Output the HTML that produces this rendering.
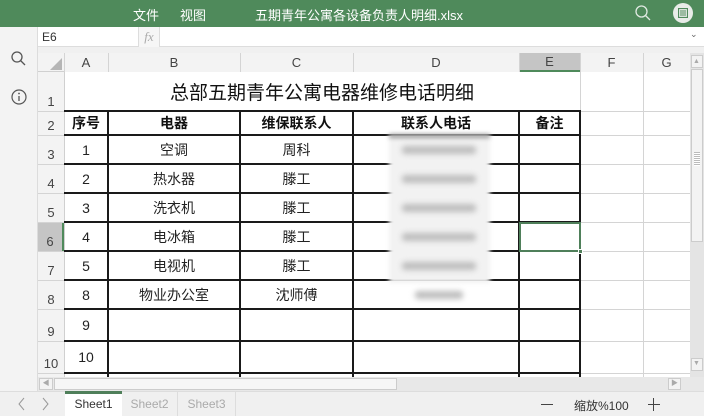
<!DOCTYPE html>
<html><head><meta charset="utf-8">
<style>
*{margin:0;padding:0;box-sizing:border-box}
body{width:704px;height:416px;overflow:hidden;background:#fff;font-family:"Liberation Sans","Noto Sans CJK SC",sans-serif;position:relative}
.a{position:absolute}
.top{left:0;top:0;width:704px;height:27px;background:#4f8a5b;color:#fff;font-size:13px}
.side{left:0;top:27px;width:38px;height:364px;background:#f3f3f3;border-right:1px solid #dcdcdc}
.hl{position:absolute;height:1px;background:#d4d4d4}
.vl{position:absolute;width:1px;background:#d4d4d4}
.bh{position:absolute;height:2px;background:#1a1a1a}
.bv{position:absolute;width:2px;background:#1a1a1a}
.c{position:absolute;display:flex;align-items:center;justify-content:center;font-size:14px;color:#222}
.b{font-weight:bold;color:#111}
.rh{position:absolute;left:38px;width:26px;display:flex;align-items:flex-end;justify-content:center;font-size:13px;color:#444;padding-bottom:2px;background:#f3f3f3}
.ch{position:absolute;top:53px;height:19px;display:flex;align-items:center;justify-content:center;font-size:13px;color:#444;background:#f3f3f3}
.blur{position:absolute;background:#bdbdbd;filter:blur(3px);border-radius:3px}
</style></head><body>
<div class="a top">
 <span class="a" style="left:133px;top:5px">文件</span>
 <span class="a" style="left:180px;top:5px">视图</span>
 <span class="a" style="left:255px;top:5px">五期青年公寓各设备负责人明细.xlsx</span>
 <svg class="a" style="left:634px;top:4px" width="18" height="18" viewBox="0 0 18 18"><circle cx="7.5" cy="7.5" r="5.5" fill="none" stroke="#dfe9e1" stroke-width="1.3"/><line x1="11.5" y1="11.5" x2="16" y2="16" stroke="#dfe9e1" stroke-width="1.3"/></svg>
 <div class="a" style="left:673px;top:3px;width:20px;height:20px;border-radius:50%;background:#e8ece8"></div>
 <svg class="a" style="left:678px;top:8px" width="10" height="10" viewBox="0 0 10 10"><rect x="0.5" y="0.5" width="9" height="9" fill="none" stroke="#4f8a5b" stroke-width="1.2"/><line x1="2" y1="3" x2="8" y2="3" stroke="#4f8a5b"/><line x1="2" y1="5" x2="8" y2="5" stroke="#4f8a5b"/><line x1="2" y1="7" x2="8" y2="7" stroke="#4f8a5b"/></svg>
</div>
<div class="a side"></div>
<svg class="a" style="left:10px;top:50px" width="18" height="18" viewBox="0 0 18 18"><circle cx="7" cy="7" r="5" fill="none" stroke="#555" stroke-width="1.3"/><line x1="10.5" y1="10.5" x2="15" y2="15" stroke="#555" stroke-width="1.3"/></svg>
<svg class="a" style="left:10px;top:88px" width="18" height="18" viewBox="0 0 18 18"><circle cx="9" cy="9" r="7" fill="none" stroke="#555" stroke-width="1.2"/><line x1="9" y1="8" x2="9" y2="13" stroke="#555" stroke-width="1.3"/><circle cx="9" cy="5.5" r="0.9" fill="#555"/></svg>
<div class="a" style="left:38px;top:27px;width:666px;height:20px;background:#fff;border-bottom:1px solid #ddd"></div>
<div class="a" style="left:42px;top:30px;font-size:12px;color:#333">E6</div>
<div class="a" style="left:138px;top:27px;width:22px;height:20px;border-left:1px solid #ddd;border-right:1px solid #ddd;background:#f6f6f6;font-family:'Liberation Serif',serif;font-style:italic;color:#aaa;font-size:13px;text-align:center;line-height:20px">fx</div>
<div class="a" style="left:690px;top:29px;font-size:9px;color:#666">⌄</div>
<div class="a" style="left:38px;top:47px;width:666px;height:6px;background:#f0f0f0"></div>
<div class="a" style="left:38px;top:53px;width:652px;height:19px;background:#f3f3f3;border-bottom:1px solid #d0d0d0"></div>
<svg class="a" style="left:50px;top:58px" width="12" height="12"><polygon points="12,0 12,12 0,12" fill="#b5b5b5"/></svg>
<div class="ch" style="left:64px;width:44px">A</div>
<div class="ch" style="left:108px;width:132px">B</div>
<div class="ch" style="left:240px;width:113px">C</div>
<div class="ch" style="left:353px;width:166px">D</div>
<div class="ch" style="left:519px;width:61px;background:#c5c5c5;border-bottom:2px solid #4f8a5b;height:19px">E</div>
<div class="ch" style="left:580px;width:63px">F</div>
<div class="ch" style="left:643px;width:47px">G</div>
<div class="vl" style="left:64px;top:53px;height:19px"></div>
<div class="vl" style="left:108px;top:53px;height:19px"></div>
<div class="vl" style="left:240px;top:53px;height:19px"></div>
<div class="vl" style="left:353px;top:53px;height:19px"></div>
<div class="vl" style="left:519px;top:53px;height:19px"></div>
<div class="vl" style="left:580px;top:53px;height:19px"></div>
<div class="vl" style="left:643px;top:53px;height:19px"></div>
<div class="rh" style="top:72px;height:39px">1</div>
<div class="rh" style="top:111px;height:24px">2</div>
<div class="rh" style="top:135px;height:29px">3</div>
<div class="rh" style="top:164px;height:29px">4</div>
<div class="rh" style="top:193px;height:29px">5</div>
<div class="rh" style="top:222px;height:29px;background:#c5c5c5;border-right:2px solid #4f8a5b">6</div>
<div class="rh" style="top:251px;height:29px">7</div>
<div class="rh" style="top:280px;height:29px">8</div>
<div class="rh" style="top:309px;height:32px">9</div>
<div class="rh" style="top:341px;height:32px">10</div>
<div class="rh" style="top:373px;height:4px"></div>
<div class="vl" style="left:64px;top:72px;height:305px;background:#d0d0d0"></div>
<div class="hl" style="left:38px;top:111px;width:652px"></div>
<div class="hl" style="left:38px;top:135px;width:652px"></div>
<div class="hl" style="left:38px;top:164px;width:652px"></div>
<div class="hl" style="left:38px;top:193px;width:652px"></div>
<div class="hl" style="left:38px;top:222px;width:652px"></div>
<div class="hl" style="left:38px;top:251px;width:652px"></div>
<div class="hl" style="left:38px;top:280px;width:652px"></div>
<div class="hl" style="left:38px;top:309px;width:652px"></div>
<div class="hl" style="left:38px;top:341px;width:652px"></div>
<div class="hl" style="left:38px;top:373px;width:652px"></div>
<div class="vl" style="left:643px;top:72px;height:305px"></div>
<div class="vl" style="left:580px;top:72px;height:39px"></div>
<div class="bh" style="left:64px;top:110px;width:517px"></div>
<div class="bh" style="left:64px;top:134px;width:517px"></div>
<div class="bh" style="left:64px;top:163px;width:517px"></div>
<div class="bh" style="left:64px;top:192px;width:517px"></div>
<div class="bh" style="left:64px;top:221px;width:517px"></div>
<div class="bh" style="left:64px;top:250px;width:517px"></div>
<div class="bh" style="left:64px;top:279px;width:517px"></div>
<div class="bh" style="left:64px;top:308px;width:517px"></div>
<div class="bh" style="left:64px;top:340px;width:517px"></div>
<div class="bh" style="left:64px;top:372px;width:517px"></div>
<div class="bv" style="left:107px;top:110px;height:267px"></div>
<div class="bv" style="left:239px;top:110px;height:267px"></div>
<div class="bv" style="left:352px;top:110px;height:267px"></div>
<div class="bv" style="left:518px;top:110px;height:267px"></div>
<div class="bv" style="left:579px;top:110px;height:267px"></div>
<div class="c" style="left:64px;top:72px;width:516px;height:39px;font-size:19px;color:#111">总部五期青年公寓电器维修电话明细</div>
<div class="c b" style="left:64px;top:111px;width:44px;height:24px">序号</div>
<div class="c b" style="left:108px;top:111px;width:132px;height:24px">电器</div>
<div class="c b" style="left:240px;top:111px;width:113px;height:24px">维保联系人</div>
<div class="c b" style="left:353px;top:111px;width:166px;height:24px">联系人电话</div>
<div class="c b" style="left:519px;top:111px;width:61px;height:24px">备注</div>
<div class="c" style="left:64px;top:135px;width:44px;height:29px">1</div>
<div class="c" style="left:108px;top:135px;width:132px;height:29px">空调</div>
<div class="c" style="left:240px;top:135px;width:113px;height:29px">周科</div>
<div class="c" style="left:64px;top:164px;width:44px;height:29px">2</div>
<div class="c" style="left:108px;top:164px;width:132px;height:29px">热水器</div>
<div class="c" style="left:240px;top:164px;width:113px;height:29px">滕工</div>
<div class="c" style="left:64px;top:193px;width:44px;height:29px">3</div>
<div class="c" style="left:108px;top:193px;width:132px;height:29px">洗衣机</div>
<div class="c" style="left:240px;top:193px;width:113px;height:29px">滕工</div>
<div class="c" style="left:64px;top:222px;width:44px;height:29px">4</div>
<div class="c" style="left:108px;top:222px;width:132px;height:29px">电冰箱</div>
<div class="c" style="left:240px;top:222px;width:113px;height:29px">滕工</div>
<div class="c" style="left:64px;top:251px;width:44px;height:29px">5</div>
<div class="c" style="left:108px;top:251px;width:132px;height:29px">电视机</div>
<div class="c" style="left:240px;top:251px;width:113px;height:29px">滕工</div>
<div class="c" style="left:64px;top:280px;width:44px;height:29px">8</div>
<div class="c" style="left:108px;top:280px;width:132px;height:29px">物业办公室</div>
<div class="c" style="left:240px;top:280px;width:113px;height:29px">沈师傅</div>
<div class="c" style="left:64px;top:309px;width:44px;height:32px">9</div>
<div class="c" style="left:64px;top:341px;width:44px;height:32px">10</div>
<div class="a" style="left:389px;top:135px;width:101px;height:148px;background:#f2f2f2;filter:blur(2px)"></div>
<div class="a" style="left:389px;top:134px;width:101px;height:4px;background:#999;filter:blur(2px)"></div>
<div class="blur" style="left:402px;top:146px;width:74px;height:8px"></div>
<div class="blur" style="left:402px;top:175px;width:74px;height:8px"></div>
<div class="blur" style="left:402px;top:204px;width:74px;height:8px"></div>
<div class="blur" style="left:402px;top:233px;width:74px;height:8px"></div>
<div class="blur" style="left:402px;top:262px;width:74px;height:8px"></div>
<div class="blur" style="left:415px;top:291px;width:48px;height:8px"></div>
<div class="a" style="left:519px;top:222px;width:62px;height:30px;border:2px solid #4f7f5a"></div>
<div class="a" style="left:578px;top:249px;width:5px;height:5px;background:#4f7f5a;border:1px solid #fff"></div>
<div class="a" style="left:690px;top:53px;width:14px;height:324px;background:#e4e4e4"></div>
<div class="a" style="left:691px;top:55px;width:12px;height:13px;background:#f3f3f3;border:1px solid #ccc"></div>
<div class="a" style="left:693px;top:58px;font-size:7px;color:#aaa">▲</div>
<div class="a" style="left:691px;top:69px;width:12px;height:173px;background:#f3f3f3;border:1px solid #ccc"></div>
<div class="a" style="left:694px;top:152px;width:6px;height:14px;border-top:1px solid #bbb;background:repeating-linear-gradient(#fff 0 1px,#bbb 1px 2px)"></div>
<div class="a" style="left:691px;top:358px;width:12px;height:13px;background:#f3f3f3;border:1px solid #ccc"></div>
<div class="a" style="left:693px;top:360px;font-size:7px;color:#aaa">▼</div>
<div class="a" style="left:38px;top:377px;width:666px;height:14px;background:#e8e8e8"></div>
<div class="a" style="left:39px;top:378px;width:14px;height:12px;background:#f3f3f3;border:1px solid #ccc;font-size:7px;color:#aaa;text-align:center;line-height:10px">◀</div>
<div class="a" style="left:54px;top:378px;width:343px;height:12px;background:#f6f6f6;border:1px solid #ccc"></div>
<div class="a" style="left:668px;top:378px;width:13px;height:12px;background:#f3f3f3;border:1px solid #ccc;font-size:7px;color:#aaa;text-align:center;line-height:10px">▶</div>
<div class="a" style="left:0;top:391px;width:704px;height:25px;background:#f0f0f0;border-top:1px solid #ddd"></div>
<svg class="a" style="left:16px;top:396px" width="40" height="16" viewBox="0 0 40 16"><polyline points="8,2 3,8 8,14" fill="none" stroke="#999" stroke-width="1"/><polyline points="27,2 32,8 27,14" fill="none" stroke="#999" stroke-width="1"/></svg>
<div class="a" style="left:65px;top:391px;width:57px;height:25px;background:#fff;border-top:3px solid #4f7f5a;font-size:12px;color:#333;text-align:center;line-height:21px">Sheet1</div>
<div class="a" style="left:122px;top:392px;width:56px;height:24px;border-right:1px solid #ddd;font-size:12px;color:#aaa;text-align:center;line-height:24px">Sheet2</div>
<div class="a" style="left:178px;top:392px;width:58px;height:24px;border-right:1px solid #ddd;font-size:12px;color:#aaa;text-align:center;line-height:24px">Sheet3</div>
<div class="a" style="left:541px;top:404px;width:12px;height:1px;background:#444"></div>
<div class="a" style="left:574px;top:397px;font-size:12px;color:#333">缩放%100</div>
<div class="a" style="left:648px;top:404px;width:12px;height:1px;background:#444"></div>
<div class="a" style="left:653px;top:398px;width:1px;height:13px;background:#444"></div>
</body></html>
